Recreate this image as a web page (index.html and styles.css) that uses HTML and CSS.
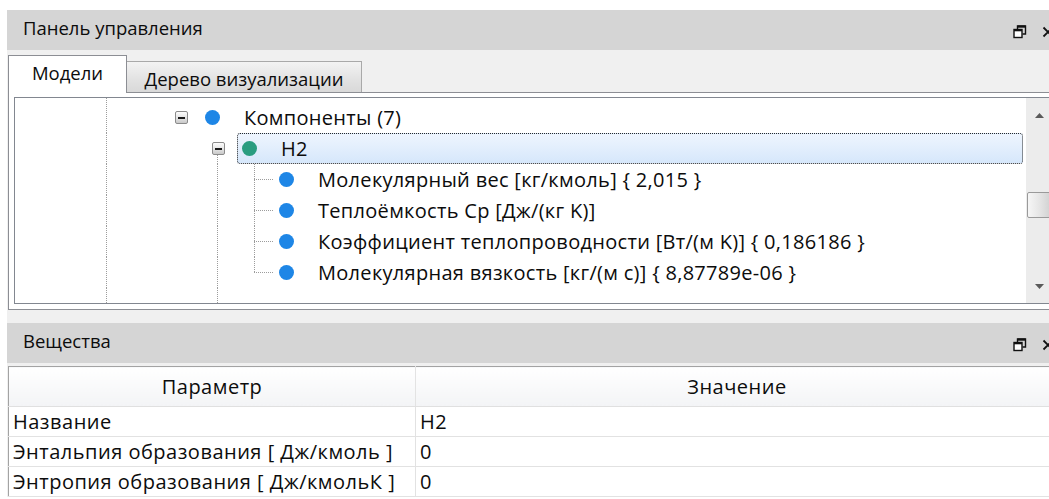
FILE: index.html
```html
<!DOCTYPE html>
<html lang="ru">
<head>
<meta charset="utf-8">
<title>Панель управления</title>
<link rel="stylesheet" href="styles.css">
</head>
<body>
<div class="app">

  <section class="dock">
    <header class="dock-head">
      <span class="dock-title">Панель управления</span>
      <span class="dock-tools">
        <svg class="ico-restore" width="14" height="14" viewBox="0 0 14 14" aria-hidden="true">
          <path d="M4.5 4.5V1h8v8H9.5" fill="none" stroke="#111" stroke-width="1.4"/>
          <path d="M4.5 1.6h8" stroke="#111" stroke-width="2.2"/>
          <rect x="1" y="4.5" width="8" height="8" fill="#fff" stroke="#111" stroke-width="1.4"/>
          <path d="M1 5.2h8" stroke="#111" stroke-width="2.2"/>
        </svg>
        <svg class="ico-close" width="12" height="12" viewBox="0 0 12 12" aria-hidden="true">
          <path d="M1.5 1.5l9 9M10.5 1.5l-9 9" stroke="#111" stroke-width="1.8"/>
        </svg>
      </span>
    </header>
    <div class="dock-body dock-body-tabs">
      <div class="tabs">
        <div class="tab tab-active">Модели</div>
        <div class="tab">Дерево визуализации</div>
      </div>
      <div class="tab-page">
        <div class="tree">
          <div class="tree-rows">
            <div class="row spacer-top">
              <span class="ind"></span><span class="ind"></span><span class="ind v"></span>
            </div>
            <div class="row">
              <span class="ind"></span><span class="ind"></span><span class="ind v"></span><span class="ind"></span>
              <span class="exp"><span class="box"></span></span>
              <span class="node"><span class="dot"></span><span class="label">Компоненты (7)</span></span>
            </div>
            <div class="row">
              <span class="ind"></span><span class="ind"></span><span class="ind v"></span><span class="ind"></span><span class="ind"></span>
              <span class="exp tail"><span class="box"></span></span>
              <span class="node sel"><span class="dot dot-green"></span><span class="label">H2</span></span>
            </div>
            <div class="row">
              <span class="ind"></span><span class="ind"></span><span class="ind v"></span><span class="ind"></span><span class="ind"></span><span class="ind v"></span>
              <span class="conn"></span>
              <span class="node"><span class="dot"></span><span class="label">Молекулярный вес [кг/кмоль] { 2,015 }</span></span>
            </div>
            <div class="row">
              <span class="ind"></span><span class="ind"></span><span class="ind v"></span><span class="ind"></span><span class="ind"></span><span class="ind v"></span>
              <span class="conn"></span>
              <span class="node"><span class="dot"></span><span class="label">Теплоёмкость Cp [Дж/(кг K)]</span></span>
            </div>
            <div class="row">
              <span class="ind"></span><span class="ind"></span><span class="ind v"></span><span class="ind"></span><span class="ind"></span><span class="ind v"></span>
              <span class="conn"></span>
              <span class="node"><span class="dot"></span><span class="label">Коэффициент теплопроводности [Вт/(м K)] { 0,186186 }</span></span>
            </div>
            <div class="row">
              <span class="ind"></span><span class="ind"></span><span class="ind v"></span><span class="ind"></span><span class="ind"></span><span class="ind v"></span>
              <span class="conn last"></span>
              <span class="node"><span class="dot"></span><span class="label">Молекулярная вязкость [кг/(м с)] { 8,87789e-06 }</span></span>
            </div>
            <div class="row spacer-bottom">
              <span class="ind"></span><span class="ind"></span><span class="ind v"></span><span class="ind"></span><span class="ind"></span><span class="ind v"></span>
            </div>
          </div>
          <div class="vscroll">
            <div class="vs-btn">
              <svg width="9" height="5" viewBox="0 0 9 5" aria-hidden="true"><path d="M4.5 0L9 5H0z" fill="#5a5a5a"/></svg>
            </div>
            <div class="vs-track"><div class="vs-thumb"></div></div>
            <div class="vs-btn">
              <svg width="9" height="5" viewBox="0 0 9 5" aria-hidden="true"><path d="M0 0h9L4.5 5z" fill="#5a5a5a"/></svg>
            </div>
          </div>
        </div>
      </div>
    </div>
  </section>

  <section class="dock">
    <header class="dock-head">
      <span class="dock-title">Вещества</span>
      <span class="dock-tools">
        <svg class="ico-restore" width="14" height="14" viewBox="0 0 14 14" aria-hidden="true">
          <path d="M4.5 4.5V1h8v8H9.5" fill="none" stroke="#111" stroke-width="1.4"/>
          <path d="M4.5 1.6h8" stroke="#111" stroke-width="2.2"/>
          <rect x="1" y="4.5" width="8" height="8" fill="#fff" stroke="#111" stroke-width="1.4"/>
          <path d="M1 5.2h8" stroke="#111" stroke-width="2.2"/>
        </svg>
        <svg class="ico-close" width="12" height="12" viewBox="0 0 12 12" aria-hidden="true">
          <path d="M1.5 1.5l9 9M10.5 1.5l-9 9" stroke="#111" stroke-width="1.8"/>
        </svg>
      </span>
    </header>
    <div class="dock-body dock-body-grid">
      <table class="grid">
        <colgroup><col class="col-param"><col></colgroup>
        <thead>
          <tr><th>Параметр</th><th>Значение</th></tr>
        </thead>
        <tbody>
          <tr><td>Название</td><td>H2</td></tr>
          <tr><td>Энтальпия образования [ Дж/кмоль ]</td><td>0</td></tr>
          <tr><td>Энтропия образования [ Дж/кмольК ]</td><td>0</td></tr>
        </tbody>
      </table>
    </div>
  </section>

</div>
</body>
</html>
```

FILE: styles.css
```css
html, body {
  margin: 0;
  padding: 0;
  background: #fff;
  overflow: hidden;
}

body {
  font-family: "Open Sans", "Noto Sans", "DejaVu Sans", sans-serif;
  font-size: 18.5px;
  color: #0c0c0c;
}

.app {
  width: 1052px;
  margin-left: 7px;
  padding-top: 10px;
}

/* dock panel header */
.dock-head {
  height: 40px;
  background: #d5d5d5;
  display: flex;
  align-items: center;
  justify-content: space-between;
  padding-left: 16px;
}

.dock-title {
  margin-top: -5px;
}

.dock-tools {
  display: flex;
  align-items: center;
  gap: 15px;
  padding-right: 5px;
  margin-top: 3px;
}

.dock-body {
  background: #f0f0f0;
}

.dock-body-tabs {
  padding: 0 0 13px 1px;
}

/* tabs */
.tabs {
  height: 42px;
  display: flex;
  align-items: flex-end;
}

.tab {
  height: 31px;
  width: 236px;
  box-sizing: border-box;
  border: 1px solid #a9a9a9;
  border-bottom: none;
  background: linear-gradient(#f3f3f3, #e3e3e3 55%, #d9d9d9);
  display: flex;
  align-items: center;
  justify-content: center;
  margin-left: -1px;
  padding-top: 2px;
  white-space: nowrap;
}

.tab-active {
  width: 119px;
  height: 38px;
  margin-left: 0;
  margin-bottom: -1px;
  background: #fff;
  border-color: #8c8e94;
  position: relative;
  z-index: 1;
  padding-top: 0;
  padding-bottom: 4px;
}

.tab-page {
  border: 1px solid #8c8e94;
  background: #fff;
  padding: 4px 5px 5px 5px;
}

/* tree view */
.tree {
  height: 207px;
  box-sizing: border-box;
  border: 1px solid #828790;
  display: flex;
  font-size: 20px;
  letter-spacing: 0.3px;
}

.tree-rows {
  flex: 1;
  display: flex;
  flex-direction: column;
  min-width: 0;
}

.row {
  height: 31px;
  display: flex;
  align-items: stretch;
  flex: none;
}

.spacer-top {
  height: 4px;
}

.spacer-bottom {
  flex: 1;
  height: auto;
}

.ind,
.exp,
.conn {
  width: 37px;
  flex: none;
}

.v {
  background: repeating-linear-gradient(to bottom, #9c9c9c 0 1px, transparent 1px 2px) 17px 0 / 1px 100% no-repeat;
}

.exp {
  display: flex;
  align-items: center;
  justify-content: center;
}

.exp.tail {
  background: repeating-linear-gradient(to bottom, #9c9c9c 0 1px, transparent 1px 2px) 17px 100% / 1px 50% no-repeat;
}

.box {
  width: 13px;
  height: 13px;
  box-sizing: border-box;
  border: 1px solid #8b8b8b;
  border-radius: 2px;
  background: linear-gradient(#fdfdfd, #e6e6e6 50%, #c9c9c9);
  display: flex;
  align-items: center;
  justify-content: center;
  margin-right: 1px;
}

.box::before {
  content: "";
  width: 7px;
  height: 2px;
  background: #1a1a1a;
}

.conn {
  background:
    repeating-linear-gradient(to right, #9c9c9c 0 1px, transparent 1px 2px) 17px 50% / 20px 1px no-repeat,
    repeating-linear-gradient(to bottom, #9c9c9c 0 1px, transparent 1px 2px) 17px 0 / 1px 100% no-repeat;
}

.conn.last {
  background-size: 20px 1px, 1px 50%;
}

.node {
  display: flex;
  align-items: center;
  flex: 1;
  min-width: 0;
  white-space: nowrap;
  border: 1px solid transparent;
  margin-right: 3px;
}

.node.sel {
  border: 1px dotted #2a2a2a;
  border-radius: 3px;
  background: linear-gradient(#eef5fe, #d6e7fb);
}

.dot {
  width: 15px;
  height: 15px;
  border-radius: 50%;
  background: #1e86e6;
  margin-left: 4px;
  flex: none;
}

.dot-green {
  background: #2a9d80;
}

.label {
  margin-left: 24px;
}

/* scrollbar */
.vscroll {
  width: 26px;
  flex: none;
  background: #ececec;
  display: flex;
  flex-direction: column;
}

.vs-btn {
  height: 34px;
  display: flex;
  align-items: center;
  justify-content: center;
}

.vs-track {
  flex: 1;
}

.vs-thumb {
  margin-top: 60px;
  margin-left: 1px;
  width: 24px;
  height: 26px;
  box-sizing: border-box;
  border: 1px solid #9a9a9a;
  border-radius: 2px;
  background: linear-gradient(to right, #f6f6f6, #e6e6e6 50%, #d2d2d2);
}

/* properties grid */
.dock-body-grid {
  padding: 3px 0 0 1px;
}

.grid {
  width: 100%;
  border-collapse: collapse;
  background: #fff;
  border: 1px solid #a3a3a3;
  border-bottom: none;
  table-layout: fixed;
  font-size: 20px;
  letter-spacing: 0.5px;
}

.col-param {
  width: 407px;
}

.grid th {
  height: 39px;
  font-weight: normal;
  text-align: center;
  background: linear-gradient(#ffffff, #f3f4f6);
  border-bottom: 1px solid #e0e0e0;
  border-right: 1px solid #e3e3e3;
  padding: 0;
}

.grid td {
  height: 29px;
  padding: 0 4px;
  border-bottom: 1px solid #e2e2e2;
  border-right: 1px solid #e2e2e2;
  white-space: nowrap;
}
```
